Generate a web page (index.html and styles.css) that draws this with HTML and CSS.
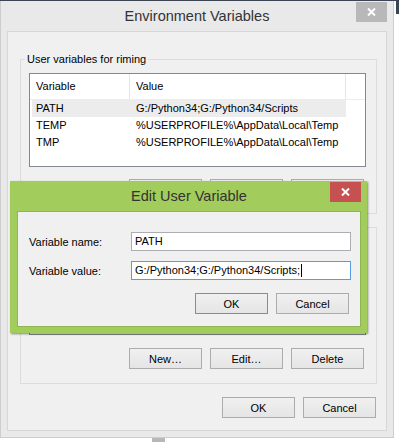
FILE: index.html
```html
<!DOCTYPE html>
<html lang="en">
  <head>
    <meta charset="UTF-8" />
    <title>Environment Variables</title>
    <link rel="stylesheet" href="styles.css">
  </head>
  <body>
    <div class="screen">
      <div class="topline"></div>
      <div class="desk">
        <div class="window">
          <div class="titlebar">
            <div class="title">Environment Variables</div>
            <div class="close close-gray">
              <svg width="9" height="8" viewBox="0 0 9 8"><path d="M1 0.5 L8 7.5 M8 0.5 L1 7.5" stroke="#fff" stroke-width="2"/></svg>
            </div>
          </div>

          <div class="client">
            <fieldset class="group">
              <legend>User variables for riming</legend>
              <div class="list">
                <div class="list-head">
                  <div class="head-name">Variable</div>
                  <div class="head-value">Value</div>
                  <div class="head-fill"></div>
                </div>
                <div class="row selected">
                  <div class="cell-name">PATH</div>
                  <div class="cell-value">G:/Python34;G:/Python34/Scripts</div>
                </div>
                <div class="row">
                  <div class="cell-name">TEMP</div>
                  <div class="cell-value">%USERPROFILE%\AppData\Local\Temp</div>
                </div>
                <div class="row">
                  <div class="cell-name">TMP</div>
                  <div class="cell-value">%USERPROFILE%\AppData\Local\Temp</div>
                </div>
              </div>
              <div class="actions">
                <button class="btn">New...</button>
                <button class="btn">Edit...</button>
                <button class="btn">Delete</button>
              </div>
            </fieldset>

            <fieldset class="group group-system">
              <legend>System variables</legend>
              <div class="list"></div>
              <div class="actions">
                <button class="btn">New…</button>
                <button class="btn">Edit…</button>
                <button class="btn">Delete</button>
              </div>
            </fieldset>

            <div class="footer">
              <button class="btn">OK</button>
              <button class="btn">Cancel</button>
            </div>
          </div>
        </div>
        <div class="edge"><div class="edge-dark"></div></div>
      </div>
      <div class="below"><div class="below-block"></div></div>

      <!-- modal on top of the main window -->
      <div class="dialog">
        <div class="titlebar dialog-titlebar">
          <div class="title">Edit User Variable</div>
          <div class="close close-red">
            <svg width="9" height="8" viewBox="0 0 9 8"><path d="M1 0.5 L8 7.5 M8 0.5 L1 7.5" stroke="#fff" stroke-width="2"/></svg>
          </div>
        </div>
        <div class="dialog-client">
          <div class="form">
            <label>Variable name:</label>
            <div class="field">PATH</div>
            <label>Variable value:</label>
            <div class="field focused">G:/Python34;G:/Python34/Scripts;<span class="caret"></span></div>
          </div>
          <div class="dialog-actions">
            <button class="btn btn-default">OK</button>
            <button class="btn">Cancel</button>
          </div>
        </div>
      </div>
    </div>
  </body>
</html>
```

FILE: styles.css
```css
* {
  margin: 0;
  padding: 0;
  box-sizing: border-box;
}

body {
  background: #fff;
  font-family: "Segoe UI", "Liberation Sans", Arial, sans-serif;
  font-size: 11px;
  color: #000;
}

.screen {
  position: relative;
  width: 399px;
  height: 442px;
  overflow: hidden;
}

.topline {
  height: 1px;
  background: #3b4553;
}

.desk {
  display: flex;
}

.window {
  width: 394px;
  height: 437px;
  background: #e9e9e9;
  border: 1px solid #cdcdcd;
  border-top: none;
  display: flex;
  flex-direction: column;
}

.titlebar {
  height: 30px;
  display: grid;
  grid-template-columns: 1fr auto 1fr;
  align-items: start;
}

.title {
  grid-column: 2;
  line-height: 30px;
  font-size: 14.5px;
  color: #333;
}

.close {
  grid-column: 3;
  justify-self: end;
  width: 31px;
  height: 20px;
  margin-top: 1px;
  display: flex;
  align-items: center;
  justify-content: center;
}

.close-gray {
  background: #b8b8b8;
  margin-right: 6px;
}

.close-red {
  background: #c75050;
}

.client {
  flex: 1;
  margin: 0 6px 6px;
  background: #f0f0f0;
  border: 1px solid #d7d7d7;
  padding: 0 9px 0 12px;
}

.group {
  border: 1px solid #dcdcdc;
  margin-top: 21px;
  padding: 7px 10px 13px 8px;
}

.group legend {
  line-height: 13px;
  padding: 0 2px;
  margin-left: -4px;
}

.group-system {
  margin-top: 7px;
  padding-bottom: 14px;
}

.group-system .actions {
  margin-top: 13px;
}

.list {
  width: 337px;
  height: 94px;
  border: 1px solid #828790;
  background: #fff;
}

.list-head {
  display: flex;
  height: 26px;
  border-bottom: 1px solid #ededed;
  line-height: 25px;
}

.head-name {
  width: 100px;
  padding-left: 6px;
  border-right: 1px solid #e5e5e5;
}

.head-value {
  width: 216px;
  padding-left: 6px;
  border-right: 1px solid #e5e5e5;
}

.head-fill {
  flex: 1;
}

.row {
  display: flex;
  width: 314px;
  height: 17px;
  margin-left: 2px;
  line-height: 17px;
}

.row.selected {
  background: #ececec;
}

.cell-name {
  width: 98px;
  padding-left: 4px;
}

.cell-value {
  padding-left: 6px;
  white-space: nowrap;
}

.actions {
  display: flex;
  justify-content: flex-end;
  gap: 8px;
  margin-top: 12px;
  padding-right: 2px;
}

.btn {
  width: 73px;
  height: 21px;
  border: 1px solid #acacac;
  background: linear-gradient(#f0f0f0, #e5e5e5);
  font-family: inherit;
  font-size: 11px;
  color: #000;
}

.btn-default {
  border-color: #4a9ae6;
}

.footer {
  display: flex;
  justify-content: flex-end;
  gap: 8px;
  margin-top: 13px;
  padding-right: 1px;
}

.edge {
  flex: 1;
  padding-left: 2px;
}

.edge-dark {
  height: 13px;
  background: #3b4553;
}

.below {
  height: 4px;
}

.below-block {
  width: 13px;
  height: 4px;
  margin-left: 152px;
  background: #b7b7b7;
}

/* Edit User Variable */
.dialog {
  position: absolute;
  left: 10px;
  top: 181px;
  width: 357px;
  height: 152px;
  background: #a2cc5c;
  padding: 0 6px 6px 7px;
  box-shadow: 1px 1px 2px rgba(0, 0, 0, 0.45);
  display: flex;
  flex-direction: column;
}

.dialog-client {
  flex: 1;
  background: #f0f0f0;
  border: 1px solid #8fb552;
  padding: 20px 9px 0 11px;
}

.form {
  display: grid;
  grid-template-columns: 102px 1fr;
  row-gap: 10px;
  align-items: center;
}

.field {
  height: 19px;
  border: 1px solid #abadb3;
  background: #fff;
  padding-left: 3px;
  line-height: 17px;
  white-space: nowrap;
}

.field.focused {
  border-color: #569de5;
}

.caret {
  display: inline-block;
  width: 1px;
  height: 13px;
  background: #000;
  vertical-align: -3px;
  margin-left: 1px;
}

.dialog-actions {
  display: flex;
  justify-content: flex-end;
  gap: 8px;
  margin-top: 13px;
  padding-right: 2px;
}
```
